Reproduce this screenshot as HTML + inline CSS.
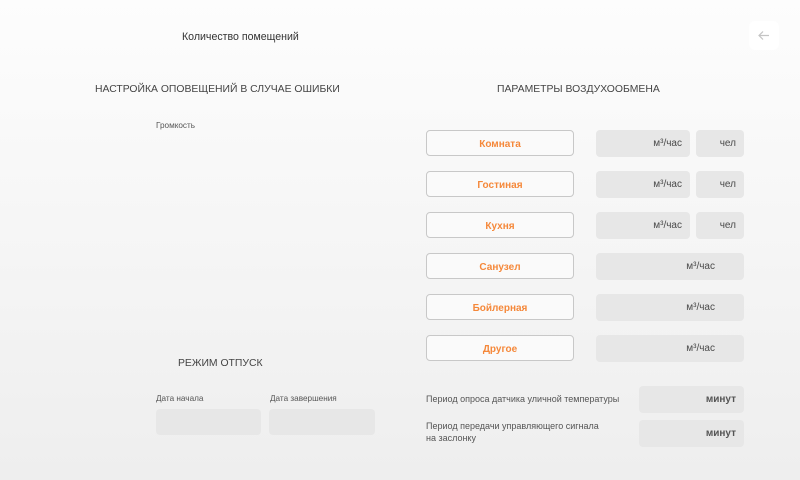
<!DOCTYPE html>
<html><head><meta charset="utf-8"><style>
*{margin:0;padding:0;box-sizing:border-box}
body{width:800px;height:480px;overflow:hidden;position:relative;font-family:"Liberation Sans",sans-serif;background:linear-gradient(#fdfdfd,#eeeeee);color:#444}
.a{position:absolute}
.t{font-size:10.6px;color:#333}
.h{font-size:10.4px;color:#444}
.s{font-size:8.2px;color:#555}
.btn{position:absolute;left:426px;width:148px;height:26px;border:1px solid #c8c8c8;border-radius:4px;background:#fafafa;color:#f5883a;font-size:10px;font-weight:bold;text-align:center;line-height:27px}
.box{position:absolute;height:27px;background:#e7e7e7;border-radius:4px;font-size:10px;color:#4a4a4a;text-align:right;line-height:28px;padding-right:8px}
.d{position:absolute;height:26px;background:#e7e7e7;border-radius:4px}
</style></head><body>
<div class="a t" style="left:182px;top:31px">Количество помещений</div>
<div class="a" style="left:749px;top:21px;width:30px;height:29px;background:#fff;border-radius:6px">
<svg width="30" height="29" viewBox="0 0 30 29"><path d="M20 14.5H10M14 10.5l-4 4 4 4" stroke="#c4c4c4" stroke-width="1.2" fill="none"/></svg></div>
<div class="a h" style="left:95px;top:84px">НАСТРОЙКА ОПОВЕЩЕНИЙ В СЛУЧАЕ ОШИБКИ</div>
<div class="a h" style="left:497px;top:84px">ПАРАМЕТРЫ ВОЗДУХООБМЕНА</div>
<div class="a s" style="left:156px;top:121px">Громкость</div>
<div class="btn" style="top:130px">Комната</div>
<div class="box" style="left:596px;top:130px;width:94px">м³/час</div>
<div class="box" style="left:696px;top:130px;width:48px">чел</div>
<div class="btn" style="top:171px">Гостиная</div>
<div class="box" style="left:596px;top:171px;width:94px">м³/час</div>
<div class="box" style="left:696px;top:171px;width:48px">чел</div>
<div class="btn" style="top:212px">Кухня</div>
<div class="box" style="left:596px;top:212px;width:94px">м³/час</div>
<div class="box" style="left:696px;top:212px;width:48px">чел</div>
<div class="btn" style="top:253px">Санузел</div>
<div class="box" style="left:596px;top:253px;width:148px;padding-right:29px">м³/час</div>
<div class="btn" style="top:294px">Бойлерная</div>
<div class="box" style="left:596px;top:294px;width:148px;padding-right:29px">м³/час</div>
<div class="btn" style="top:335px">Другое</div>
<div class="box" style="left:596px;top:335px;width:148px;padding-right:29px">м³/час</div>
<div class="a h" style="left:178px;top:358px">РЕЖИМ ОТПУСК</div>
<div class="a s" style="left:156px;top:394px">Дата начала</div>
<div class="a s" style="left:270px;top:394px">Дата завершения</div>
<div class="d" style="left:156px;top:409px;width:105px"></div>
<div class="d" style="left:269px;top:409px;width:106px"></div>
<div class="a s" style="left:426px;top:394px;font-size:9px">Период опроса датчика уличной температуры</div>
<div class="box" style="left:639px;top:386px;width:105px;font-weight:bold;color:#555">минут</div>
<div class="a s" style="left:426px;top:420px;line-height:12px;font-size:9px">Период передачи управляющего сигнала<br>на заслонку</div>
<div class="box" style="left:639px;top:420px;width:105px;font-weight:bold;color:#555">минут</div>
</body></html>
